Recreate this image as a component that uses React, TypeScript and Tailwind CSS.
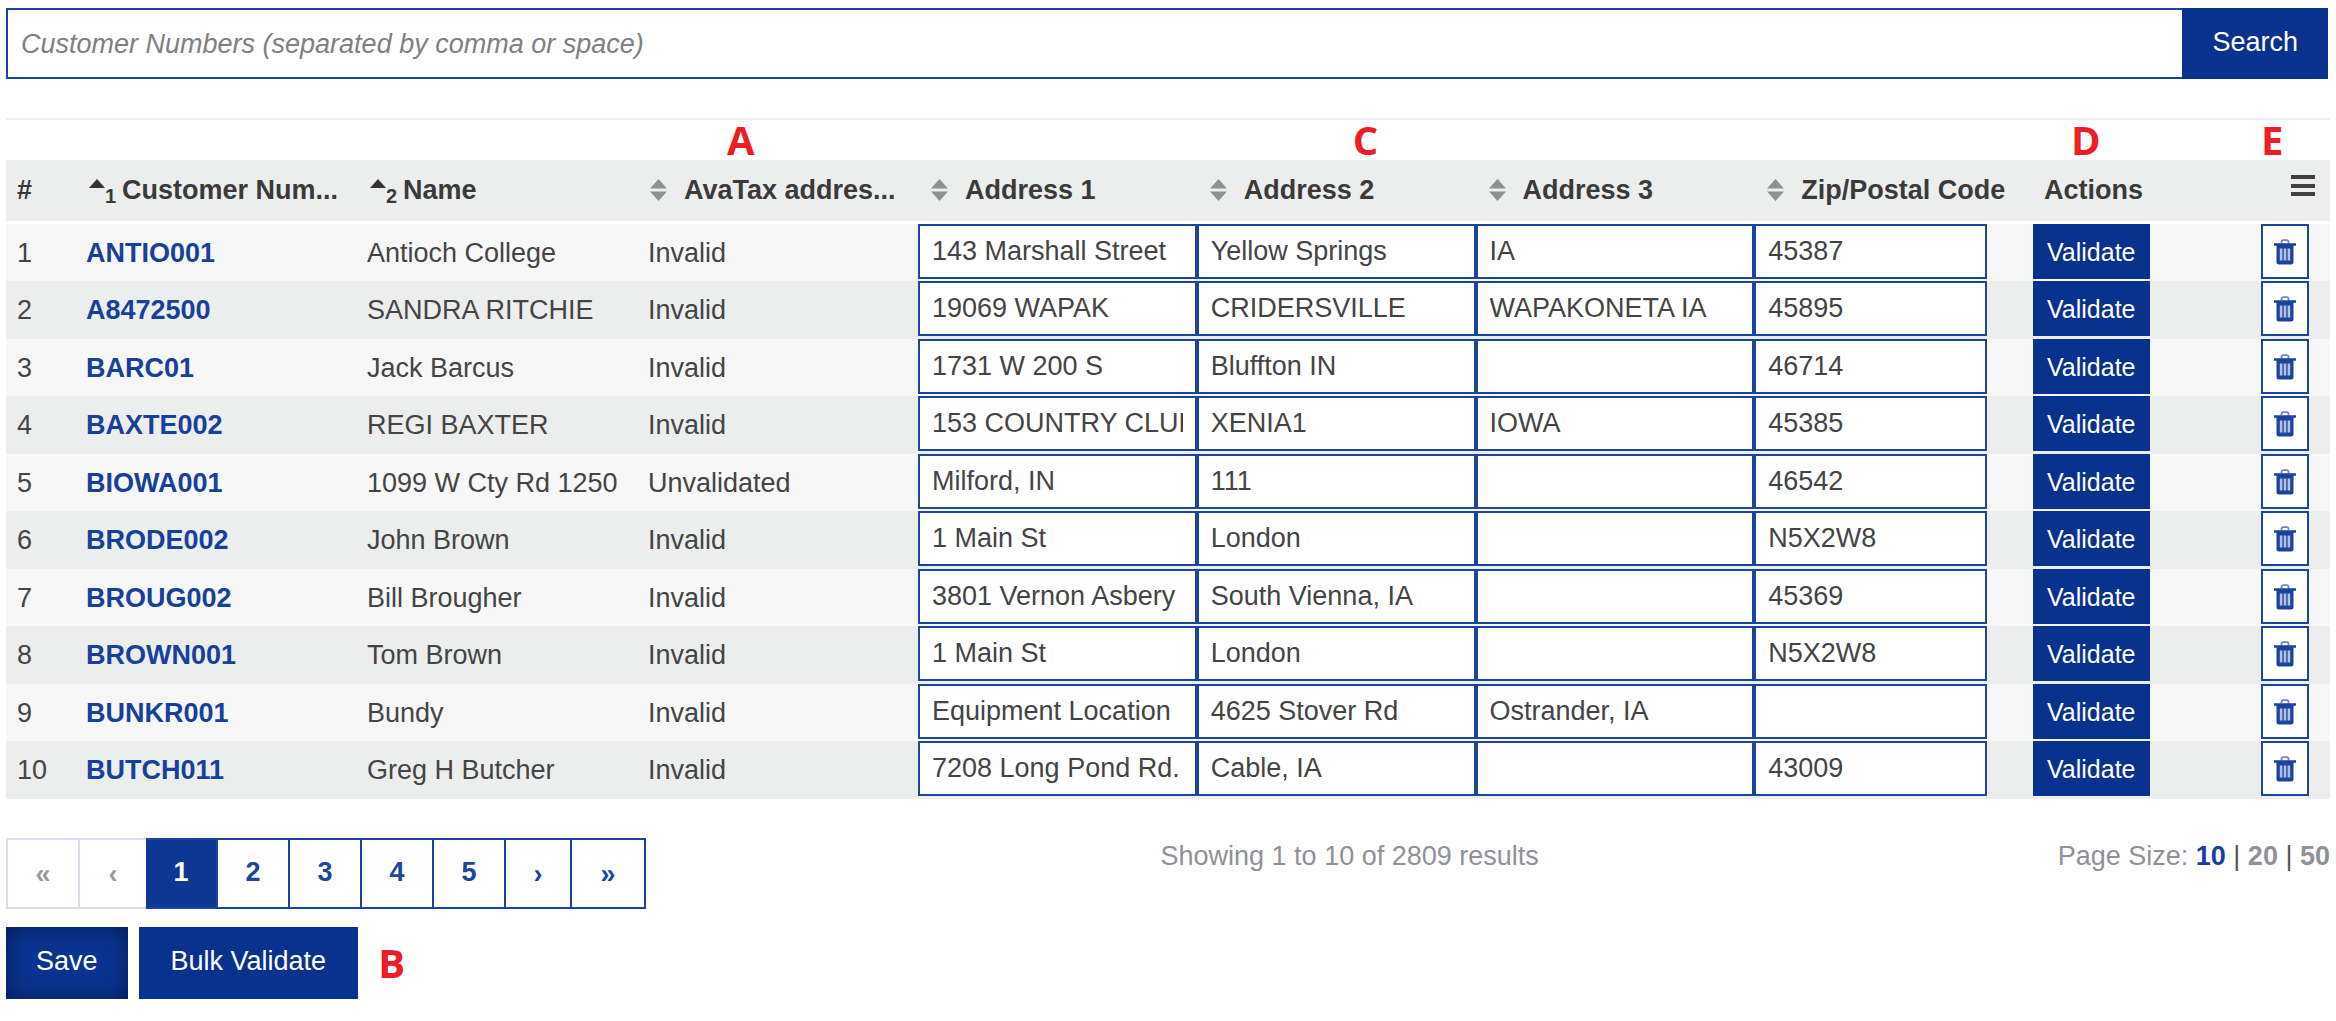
import { useState } from 'react';

interface Customer {
  id: string;
  name: string;
  status: string;
  address1: string;
  address2: string;
  address3: string;
  zip: string;
}

const customers: Customer[] = [
  { id: 'ANTIO001', name: 'Antioch College', status: 'Invalid', address1: '143 Marshall Street', address2: 'Yellow Springs', address3: 'IA', zip: '45387' },
  { id: 'A8472500', name: 'SANDRA RITCHIE', status: 'Invalid', address1: '19069 WAPAK', address2: 'CRIDERSVILLE', address3: 'WAPAKONETA IA', zip: '45895' },
  { id: 'BARC01', name: 'Jack Barcus', status: 'Invalid', address1: '1731 W 200 S', address2: 'Bluffton IN', address3: '', zip: '46714' },
  { id: 'BAXTE002', name: 'REGI BAXTER', status: 'Invalid', address1: '153 COUNTRY CLUB', address2: 'XENIA1', address3: 'IOWA', zip: '45385' },
  { id: 'BIOWA001', name: '1099 W Cty Rd 1250', status: 'Unvalidated', address1: 'Milford, IN', address2: '111', address3: '', zip: '46542' },
  { id: 'BRODE002', name: 'John Brown', status: 'Invalid', address1: '1 Main St', address2: 'London', address3: '', zip: 'N5X2W8' },
  { id: 'BROUG002', name: 'Bill Brougher', status: 'Invalid', address1: '3801 Vernon Asbery', address2: 'South Vienna, IA', address3: '', zip: '45369' },
  { id: 'BROWN001', name: 'Tom Brown', status: 'Invalid', address1: '1 Main St', address2: 'London', address3: '', zip: 'N5X2W8' },
  { id: 'BUNKR001', name: 'Bundy', status: 'Invalid', address1: 'Equipment Location', address2: '4625 Stover Rd', address3: 'Ostrander, IA', zip: '' },
  { id: 'BUTCH011', name: 'Greg H Butcher', status: 'Invalid', address1: '7208 Long Pond Rd.', address2: 'Cable, IA', address3: '', zip: '43009' },
];

const columns = [
  { label: 'Customer Num...', order: 1, width: 'w-[281px]' },
  { label: 'Name', order: 2, width: 'w-[281px]' },
  { label: 'AvaTax addres...', width: 'w-[281px]', marker: 'A', markerClass: 'left-[90px]' },
  { label: 'Address 1' },
  { label: 'Address 2', marker: 'C', markerClass: 'left-[156px]' },
  { label: 'Address 3' },
  { label: 'Zip/Postal Code' },
];

const fields = ['address1', 'address2', 'address3', 'zip'] as const;
const fieldLabels = { address1: 'Address 1', address2: 'Address 2', address3: 'Address 3', zip: 'Zip/Postal Code' };

function Marker({ children, className = '' }: { children: string; className?: string }) {
  return (
    <span className={`font-['Open_Sans',sans-serif] text-[40px] leading-[40px] font-bold text-[#ee1c25] ${className}`}>
      {children}
    </span>
  );
}

function SortIcon({ order }: { order?: number }) {
  if (order) {
    return (
      <span className="flex w-[36px] shrink-0 pl-[3px]">
        <svg viewBox="0 0 16 22" className="h-[22px] w-4 fill-[#333]">
          <path d="M8 0l8 9H0z" />
        </svg>
        <sub className="top-[6px] text-[20px] leading-[22px]">{order}</sub>
      </span>
    );
  }
  return (
    <span className="w-[36px] shrink-0 pl-[2px]">
      <svg viewBox="0 0 17 22" className="h-[22px] w-[17px] fill-[#8f9092]">
        <path d="M8.500 0l8.500 9.500H0zM0 12.500h17L8.500 22z" />
      </svg>
    </span>
  );
}

function TrashIcon() {
  return (
    <svg viewBox="0 0 22 26" className="h-[26px] w-[22px]">
      <path d="M7.500 4.500V3q0-1.800 1.800-1.800h3.400q1.800 0 1.800 1.800v1.500" fill="none" stroke="#6d86c0" strokeWidth="1.800" />
      <path d="M0 4.200h22v2.600h-2.500V23q0 2.500-2.500 2.500H5Q2.500 25.500 2.500 23V6.800H0z" fill="#1b429c" />
      <path d="M5.800 9.500h2.600v12H5.800zM9.700 9.500h2.600v12H9.700zM13.600 9.500h2.600v12h-2.600z" fill="#b3c0e0" />
    </svg>
  );
}

function Pagination() {
  const pages = ['1', '2', '3', '4', '5'];
  const page = 'h-[71px] w-[72px] border-y-2 border-r-2 border-[#1d449f] pb-1';
  const step = 'h-[71px] w-[66px] border-y-2';
  const end = 'h-[71px] w-[74px] border-y-2 border-r-2';
  return (
    <nav aria-label="Pages" className="col-span-5 flex font-bold text-[#1d449f]">
      <button disabled aria-label="First page" className={`${end} border-l-2 border-[#d7dcee] text-[#999]`}>«</button>
      <button disabled aria-label="Previous page" className={`${step} border-[#d7dcee] text-[#999]`}>‹</button>
      {pages.map(n => (
        <button
          key={n}
          aria-current={n === '1' ? 'page' : undefined}
          className={`${page} ${n === '1' ? 'bg-[#0d3792] text-white' : ''}`}
        >
          {n}
        </button>
      ))}
      <button aria-label="Next page" className={`${step} border-r-2 border-[#1d449f]`}>›</button>
      <button aria-label="Last page" className={`${end} border-[#1d449f]`}>»</button>
    </nav>
  );
}

export default function App() {
  const [rows, setRows] = useState(customers);

  const update = (index: number, field: (typeof fields)[number], value: string) => {
    setRows(rows.map((row, i) => (i === index ? { ...row, [field]: value } : row)));
  };

  return (
    <main className="bg-white px-[6px] pt-2 pb-[22px] font-['Liberation_Sans',Arial,sans-serif] text-[27px] leading-9 text-[#444]">
      <form className="mr-[2px] flex h-[71px]" onSubmit={e => e.preventDefault()}>
        <input
          type="text"
          aria-label="Customer Numbers"
          placeholder="Customer Numbers (separated by comma or space)"
          className="min-w-0 flex-1 border-2 border-r-0 border-[#1d449f] px-[13px] placeholder:text-[#808080] placeholder:italic"
        />
        <button type="submit" className="bg-[#09328f] px-[30px] pb-1 text-white">Search</button>
      </form>

      <hr className="mt-[39px] mb-10 border-t-2 border-[#eee]" />

      <table className="w-full table-fixed border-separate border-spacing-0 text-left">
        <thead>
          <tr className="h-16 bg-[#eceeed] text-[#3a3a3a] *:border-b-3 *:border-white *:pb-[2px]">
            <th className="w-[69px] px-[11px]">#</th>
            {columns.map(col => (
              <th key={col.label} className={`relative px-[11px] ${col.width ?? ''}`}>
                {col.marker && <Marker className={`absolute -top-10 ${col.markerClass}`}>{col.marker}</Marker>}
                <div className="flex items-center whitespace-nowrap">
                  <SortIcon order={col.order} />
                  {col.label}
                </div>
              </th>
            ))}
            <th className="relative w-[228px] px-[11px]">
              <Marker className="absolute -top-10 left-[38px]">D</Marker>
              Actions
            </th>
            <th className="relative w-[69px]">
              <Marker className="absolute -top-10 left-0">E</Marker>
              <button aria-label="Table menu" className="ml-[30px] block pb-2">
                <svg viewBox="0 0 24 22" className="h-[22px] w-6 fill-[#3f3f3f]">
                  <path d="M0 0h24v4H0zM0 9h24v4H0zM0 17h24v4H0z" />
                </svg>
              </button>
            </th>
          </tr>
        </thead>
        <tbody>
          {rows.map((row, index) => (
            <tr key={row.id} className="odd:h-[57px] odd:bg-[#f7f7f7] even:h-[58px] even:bg-[#eceeed]">
              <td className="px-[11px]">{index + 1}</td>
              <td className="px-[11px]">
                <a href="#" className="font-bold text-[#17409c]">{row.id}</a>
              </td>
              <td className="px-[11px] whitespace-nowrap">{row.name}</td>
              <td className="px-[11px]">{row.status}</td>
              {fields.map(field => (
                <td key={field} className="align-top">
                  <input
                    type="text"
                    aria-label={`${fieldLabels[field]} for ${row.id}`}
                    value={row[field]}
                    onChange={e => update(index, field, e.target.value)}
                    className={`block h-[55px] border-2 border-[#1d449f] bg-white px-3 ${field === 'zip' ? 'w-5/6' : 'w-full'}`}
                  />
                </td>
              ))}
              <td className="align-top">
                <button className="block h-[55px] bg-[#09328f] px-[14px] text-[25px] text-white">Validate</button>
              </td>
              <td className="align-top">
                <button aria-label={`Delete ${row.id}`} className="flex h-[55px] w-12 items-center justify-center border-2 border-[#1d449f] bg-white">
                  <TrashIcon />
                </button>
              </td>
            </tr>
          ))}
        </tbody>
      </table>

      <div className="mt-[39px] grid grid-cols-12 items-start">
        <Pagination />
        <p className="col-span-4 pr-6 text-center text-[#8f9196]">Showing 1 to 10 of 2809 results</p>
        <p className="col-span-3 text-right text-[#8f9196]">
          Page Size: <a href="#" className="font-bold text-[#17409c]">10</a>{' '}
          <span className="text-[#555]">|</span> <a href="#" className="font-bold">20</a>{' '}
          <span className="text-[#555]">|</span> <a href="#" className="font-bold">50</a>
        </p>
      </div>

      <div className="mt-[18px] flex h-[72px] items-stretch">
        <button className="bg-[#0a3392] px-[30px] pb-1 text-white shadow-[inset_0_0_24px_rgba(0,0,0,0.45)]">Save</button>
        <button className="ml-[11px] bg-[#09328f] px-8 pb-1 text-white">Bulk Validate</button>
        <Marker className="ml-5 self-center">B</Marker>
      </div>
    </main>
  );
}
